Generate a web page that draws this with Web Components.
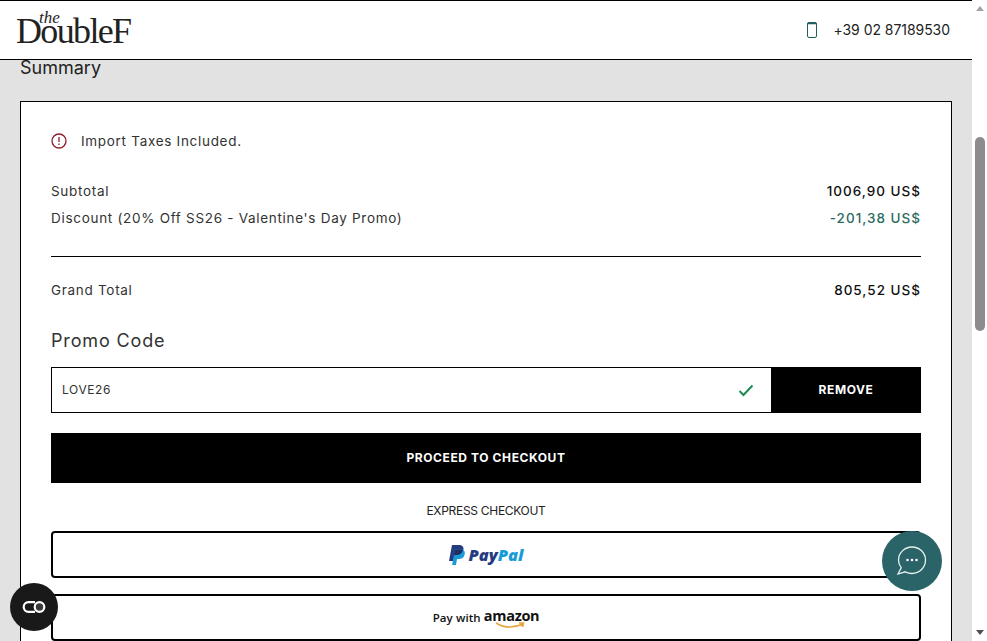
<!DOCTYPE html>
<html lang="en">
<head>
<meta charset="utf-8">
<title>Summary</title>
<style>
  html, body { margin: 0; height: 100%; overflow: hidden; }
  body { font-family: Inter, "Liberation Sans", sans-serif; color: #111; }
</style>
</head>
<body>
<checkout-page>
  <site-header slot="header"></site-header>
  <order-summary></order-summary>
</checkout-page>
<chat-button></chat-button>
<access-button></access-button>

<script>
class CheckoutPage extends HTMLElement {
    constructor() {
        super();
        const shadow = this.attachShadow({ mode: 'open' });
        shadow.innerHTML = `
            <style>
                :host { display: flex; height: 641px; width: 987px; overflow: hidden; }
                .main { flex: 1; background: #e2e2e2; display: flex; flex-direction: column; min-width: 0; overflow: hidden; }
                .track { width: 15px; flex: none; background: #fff; display: flex; flex-direction: column; align-items: center; }
                .arrow { width: 0; height: 0; border-left: 4px solid transparent; border-right: 4px solid transparent; margin-top: 6px; border-bottom: 5px solid #a3a3a3; }
                .arrow.down { border-bottom: 0; border-top: 5px solid #505050; margin-top: 0; margin-bottom: 6px; }
                .thumb { width: 10px; height: 194px; margin-top: 126px; margin-left: 1px; background: #8c8c8c; border-radius: 5px; margin-bottom: auto; }
            </style>
            <div class="main">
                <slot name="header"></slot>
                <slot></slot>
            </div>
            <div class="track">
                <span class="arrow"></span>
                <span class="thumb"></span>
                <span class="arrow down"></span>
            </div>
        `;
    }
}

class SiteHeader extends HTMLElement {
    constructor() {
        super();
        const shadow = this.attachShadow({ mode: 'open' });
        shadow.innerHTML = `
            <style>
                :host { display: flex; flex: none; box-sizing: border-box; height: 60px; background: #fff; border-top: 1px solid #000; border-bottom: 1px solid #000; align-items: center; justify-content: space-between; padding: 0 22px 0 16px; }
                .logo { position: relative; display: block; font-family: "Liberation Serif", serif; color: #222; width: 116px; height: 44px; }
                .the { position: absolute; left: 23px; top: 1px; font-style: italic; font-size: 17px; line-height: 17px; }
                .name { position: absolute; left: 0; top: 5px; font-size: 36px; line-height: 36px; letter-spacing: -1.65px; white-space: nowrap; }
                .phone { display: flex; align-items: center; gap: 16px; font-size: 14px; color: #222; }
                .phone span { letter-spacing: -0.05px; margin-bottom: 2px; }
                svg { display: block; }
            </style>
            <div class="logo"><span class="the">the</span><span class="name">DoubleF</span></div>
            <div class="phone">
                <svg width="10" height="16" viewBox="0 0 10 16" fill="none" stroke="#1f5f5f" stroke-width="1"><rect x=".5" y=".5" width="9" height="15" rx="1.500"/><path d="M.5 1.500h9" stroke-width="1.500"/></svg>
                <span>+39 02 87189530</span>
            </div>
        `;
    }
}

class OrderSummary extends HTMLElement {
    constructor() {
        super();
        const shadow = this.attachShadow({ mode: 'open' });
        shadow.innerHTML = `
            <style>
                :host { display: block; padding: 0 20px; letter-spacing: 0.7px; font-size: 13.5px; color: #333; }
                h2 { margin: 0; font-weight: 400; font-size: 18px; line-height: 16px; letter-spacing: 0; color: #222; height: 41px; }
                .card { background: #fff; border: 1px solid #000; padding: 29px 30px 0; height: 700px; box-sizing: border-box; }
                .note { display: flex; align-items: center; gap: 14px; height: 20px; margin-bottom: 30px; }
                .row { display: flex; justify-content: space-between; align-items: center; height: 20px; }
                .row + .row { margin-top: 7px; }
                .row b { font-weight: 500; color: #111; letter-spacing: 1px; }
                .row b.off { color: #2e6b62; }
                hr { border: 0; border-top: 1px solid #000; margin: 28px 0 23px; }
                h3 { margin: 30px 0 15px; font-weight: 400; font-size: 18px; line-height: 22px; letter-spacing: 0.85px; color: #333; }
                .promo { display: flex; height: 46px; box-sizing: border-box; }
                .field { flex: 1; border: 1px solid #000; border-right: 0; display: flex; align-items: center; justify-content: space-between; padding: 0 17px 0 10px; font-size: 12px; letter-spacing: 0.6px; }
                .field span { margin-bottom: 2px; }
                .remove, .proceed { background: #000; color: #fff; font-weight: 700; font-size: 12px; display: flex; align-items: center; justify-content: center; letter-spacing: 0.6px; box-sizing: border-box; padding-bottom: 2px; }
                .remove { width: 150px; }
                .proceed { height: 50px; margin-top: 20px; }
                .express { text-align: center; font-size: 12px; letter-spacing: -0.3px; line-height: 14px; margin: 21px 0 13px; color: #222; }
                pay-option + pay-option { margin-top: 16px; }
                .paypal { font-family: "Open Sans", "Liberation Sans", sans-serif; font-weight: 800; font-size: 16.5px; letter-spacing: 0; margin-right: 1px; }
                .paypal i { font-style: italic; }
                .pay { color: #253b80; }
                .pal { color: #179bd7; }
                .with { font-family: "Open Sans", sans-serif; font-size: 11.5px; font-weight: 600; letter-spacing: 0.1px; color: #111; }
                .amazon { position: relative; font-family: "Open Sans", sans-serif; font-weight: 700; font-size: 14.5px; letter-spacing: -0.3px; color: #111; line-height: 16px; margin-top: -3px; }
                .amazon svg { position: absolute; left: 11px; top: 14px; }
            </style>
            <h2>Summary</h2>
            <div class="card">
                <div class="note">
                    <svg width="16" height="16" viewBox="0 0 16 16" fill="none" stroke="#8e1c2c" stroke-width="1.300"><circle cx="8" cy="8" r="7"/><path d="M8 4v5M8 10.600v1.400"/></svg>
                    <span>Import Taxes Included.</span>
                </div>
                <div class="row"><span>Subtotal</span><b>1006,90 US$</b></div>
                <div class="row"><span>Discount (20% Off SS26 - Valentine's Day Promo)</span><b class="off">-201,38 US$</b></div>
                <hr>
                <div class="row"><span>Grand Total</span><b>805,52 US$</b></div>
                <h3>Promo Code</h3>
                <div class="promo">
                    <div class="field"><span>LOVE26</span>
                        <svg width="16" height="13" viewBox="0 0 16 13" fill="none" stroke="#1f8a55" stroke-width="2"><path d="M1.500 7l4 4 9-9.500"/></svg>
                    </div>
                    <div class="remove">REMOVE</div>
                </div>
                <div class="proceed">PROCEED TO CHECKOUT</div>
                <div class="express">EXPRESS CHECKOUT</div>
                <pay-option>
                    <svg width="18" height="20" viewBox="0 0 18 20"><path fill="#253b80" d="M4 0h6.500C14.500 0 16 2 15.400 5c-.7 3.500-3 5-6.400 5H6.500L5.300 16H1z"/><path fill="#179bd7" d="M6.500 4.500h6c3.500 0 4.800 1.800 4.200 4.700-.7 3.300-3 4.800-6 4.800H9l-1 6H4.200z"/><path fill="#222d65" d="M6.500 4.500h6c.8 0 1.700.1 2.400.4-.7 3.400-3 5.100-5.900 5.100H6.500L5.500 14z"/></svg>
                    <span class="paypal"><i class="pay">Pay</i><i class="pal">Pal</i></span>
                </pay-option>
                <pay-option>
                    <span class="with">Pay with</span>
                    <span class="amazon">amazon<svg width="30" height="7" viewBox="0 0 30 7" fill="none" stroke="#e8a33d" stroke-width="1.600"><path d="M1 1c8 5 18 5 27 1M24 1h4.500l-1 4"/></svg></span>
                </pay-option>
            </div>
        `;
    }
}

class PayOption extends HTMLElement {
    constructor() {
        super();
        const shadow = this.attachShadow({ mode: 'open' });
        shadow.innerHTML = `
            <style>
                :host { display: flex; align-items: center; justify-content: center; gap: 3px; height: 47px; box-sizing: border-box; border: 2px solid #000; border-radius: 4px; background: #fff; }
            </style>
            <slot></slot>
        `;
    }
}

class ChatButton extends HTMLElement {
    constructor() {
        super();
        const shadow = this.attachShadow({ mode: 'open' });
        shadow.innerHTML = `
            <style>
                :host { position: fixed; left: 882px; top: 531px; width: 60px; height: 60px; border-radius: 50%; background: #2a6468; display: flex; align-items: center; justify-content: center; }
            </style>
            <svg width="32" height="32" viewBox="0 0 32 32" fill="none">
                <path d="M16 2C8.500 2 2.500 8 2.500 15c0 3 1 5.500 2.700 7.700L2 29l7.200-2.200c2 1 4.300 1.700 6.800 1.700 7.500 0 13.500-6 13.500-13.500S23.500 2 16 2z" stroke="#e8f0f0" stroke-width="1.300"/>
                <circle cx="11.500" cy="15" r="1.300" fill="#fff"/><circle cx="16" cy="15" r="1.300" fill="#fff"/><circle cx="20.500" cy="15" r="1.300" fill="#fff"/>
            </svg>
        `;
    }
}

class AccessButton extends HTMLElement {
    constructor() {
        super();
        const shadow = this.attachShadow({ mode: 'open' });
        shadow.innerHTML = `
            <style>
                :host { position: fixed; left: 10px; top: 583px; width: 48px; height: 48px; border-radius: 50%; background: #191919; display: flex; align-items: center; justify-content: center; }
            </style>
            <svg width="24" height="12" viewBox="0 0 24 12" fill="none">
                <path d="M13 1.200H6.500a4.800 4.800 0 0 0 0 9.600H13" stroke="#fff" stroke-width="2.200"/>
                <circle cx="17.500" cy="6" r="4.800" stroke="#fff" stroke-width="2.200" fill="#3a3a3a"/>
            </svg>
        `;
    }
}

customElements.define('checkout-page', CheckoutPage);
customElements.define('site-header', SiteHeader);
customElements.define('order-summary', OrderSummary);
customElements.define('pay-option', PayOption);
customElements.define('chat-button', ChatButton);
customElements.define('access-button', AccessButton);
</script>
</body>
</html>
